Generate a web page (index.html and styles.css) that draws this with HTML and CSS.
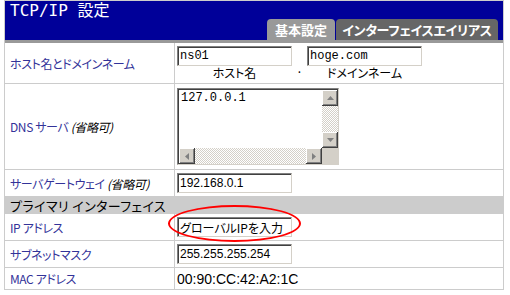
FILE: index.html
```html
<!DOCTYPE html>
<html lang="ja">
<head>
    <meta charset="UTF-8">
    <title>TCP/IP 設定</title>
    <link rel="stylesheet" href="styles.css">
</head>
<body>

<div class="panel">
    <div class="head">
        <h1 class="title">TCP/IP 設定</h1>
        <div class="tabs">
            <span class="tab tab-on">基本設定</span>
            <span class="tab tab-off">インターフェイスエイリアス</span>
        </div>
    </div>
    <div class="bar"></div>

    <div class="row row-host">
        <div class="label">ホスト名とドメインネーム</div>
        <div class="value value-top">
            <div class="hostdomain">
                <input class="field mono" type="text" value="ns01">
                <span></span>
                <input class="field mono" type="text" value="hoge.com">
                <span class="caption">ホスト名</span>
                <span class="dot">.</span>
                <span class="caption">ドメインネーム</span>
            </div>
        </div>
    </div>

    <div class="row row-dns">
        <div class="label">DNS サーバ&nbsp;<em>(省略可)</em></div>
        <div class="value value-top value-dns">
            <div class="textbox">
                <div class="textbox-text mono">127.0.0.1</div>
                <div class="vscroll">
                    <span class="sbtn"><svg width="7" height="4" viewBox="0 0 7 4"><polygon points="3.5,0 7,4 0,4" fill="#808080"/></svg></span>
                    <span class="track"></span>
                    <span class="sbtn"><svg width="7" height="4" viewBox="0 0 7 4"><polygon points="0,0 7,0 3.5,4" fill="#808080"/></svg></span>
                </div>
                <div class="hscroll">
                    <span class="sbtn"><svg width="4" height="7" viewBox="0 0 4 7"><polygon points="4,0 4,7 0,3.5" fill="#808080"/></svg></span>
                    <span class="track"></span>
                    <span class="sbtn"><svg width="4" height="7" viewBox="0 0 4 7"><polygon points="0,0 4,3.5 0,7" fill="#808080"/></svg></span>
                </div>
                <div class="corner"></div>
            </div>
        </div>
    </div>

    <div class="row row-gw">
        <div class="label">サーバゲートウェイ&nbsp;<em>(省略可)</em></div>
        <div class="value">
            <input class="field" type="text" value="192.168.0.1">
        </div>
    </div>

    <div class="row row-section">プライマリ インターフェイス</div>

    <div class="row row-ip">
        <div class="label">IP アドレス</div>
        <div class="value">
            <input class="field field-jp" type="text" value="グローバルIPを入力">
            <span class="mark"></span>
        </div>
    </div>

    <div class="row row-mask">
        <div class="label">サブネットマスク</div>
        <div class="value">
            <input class="field" type="text" value="255.255.255.254">
        </div>
    </div>

    <div class="row row-mac">
        <div class="label">MAC アドレス</div>
        <div class="value"><span class="mac">00:90:CC:42:A2:1C</span></div>
    </div>
</div>

</body>
</html>
```

FILE: styles.css
```css
body {
    margin: 0;
    padding: 0 0 0 4px;
    font-family: "Noto Sans CJK JP", sans-serif;
    font-size: 12px;
    background-color: #fff;
}
.panel {
    width: 500px;
    box-sizing: border-box;
    border: 1px solid #ccc;
}
.head {
    height: 39px;
    background-color: #000099;
    display: flex;
    justify-content: space-between;
}
.title {
    margin: 0;
    padding: 2px 0 0 5px;
    font-family: "DejaVu Sans Mono", "Noto Sans CJK JP", monospace;
    font-size: 16px;
    font-weight: normal;
    line-height: 16px;
    color: #fff;
}
.tabs {
    align-self: flex-end;
    display: flex;
    gap: 1px;
    margin-right: 5px;
}
.tab {
    height: 21px;
    line-height: 21px;
    color: #fff;
    font-weight: bold;
    font-size: 13px;
    text-align: center;
    border-radius: 4px 4px 0 0;
    font-feature-settings: "palt";
}
.tab-on {
    width: 68px;
    background-color: #999;
}
.tab-off {
    width: 162px;
    background-color: #666;
    letter-spacing: -0.3px;
}
.bar {
    height: 3px;
    background-color: #999;
}
.row {
    display: flex;
    box-sizing: border-box;
    border-top: 1px solid #ccc;
}
.row-host { height: 40px; border-top: none; }
.row-dns { height: 86px; }
.row-gw { height: 27px; }
.row-ip { height: 26px; border-top: none; }
.row-mask { height: 27px; }
.row-mac { height: 22px; }
.row-section {
    height: 18px;
    align-items: center;
    padding-left: 5px;
    background-color: #ccc;
    font-size: 13px;
    letter-spacing: 0.4px;
    font-feature-settings: "palt";
    color: #000;
}
.label {
    width: 170px;
    flex: none;
    box-sizing: border-box;
    padding-left: 5px;
    border-right: 1px solid #ccc;
    display: flex;
    align-items: center;
    color: #333399;
    letter-spacing: -0.4px;
    font-feature-settings: "palt";
}
.label em {
    font-style: italic;
    color: #000;
}
.value {
    flex: 1;
    position: relative;
    display: flex;
    align-items: center;
    padding-left: 2px;
}
.value-top {
    align-items: flex-start;
    padding-top: 3px;
}
.value-dns {
    padding-top: 4px;
}
.field {
    width: 115px;
    height: 20px;
    margin: 0;
    padding: 0 0 0 2px;
    box-sizing: border-box;
    border: 1px solid;
    border-color: #808080 #d4d0c8 #d4d0c8 #808080;
    box-shadow: inset 1px 1px #404040;
    background-color: #fff;
    font-family: "Liberation Sans", Arial, sans-serif;
    font-size: 12px;
    color: #000;
    outline: none;
}
.field-jp {
    font-family: "Noto Sans CJK JP", sans-serif;
    font-feature-settings: "palt";
}
.mono {
    font-family: "Liberation Mono", "DejaVu Sans Mono", monospace;
    font-size: 12px;
}
.hostdomain {
    display: grid;
    grid-template-columns: 115px 15px 115px;
    grid-template-rows: 20px auto;
}
.caption {
    text-align: center;
    line-height: 14px;
    color: #000;
    font-feature-settings: "palt";
}
.dot {
    text-align: center;
    line-height: 4px;
    font-size: 12px;
}
.textbox {
    width: 162px;
    height: 77px;
    box-sizing: border-box;
    border: 1px solid;
    border-color: #808080 #d4d0c8 #d4d0c8 #808080;
    box-shadow: inset 1px 1px #404040;
    padding: 1px 0 0 1px;
    display: grid;
    grid-template-columns: 1fr 16px;
    grid-template-rows: 1fr 16px;
    background-color: #fff;
}
.textbox-text {
    padding: 1px 2px;
    line-height: 14px;
}
.vscroll {
    display: grid;
    grid-template-rows: 16px 1fr 16px;
}
.hscroll {
    display: grid;
    grid-template-columns: 16px 1fr 16px;
}
.track {
    background: repeating-conic-gradient(#d4d0c8 0 25%, #fff 0 50%) 0 0 / 2px 2px;
}
.sbtn {
    width: 16px;
    height: 16px;
    display: flex;
    align-items: center;
    justify-content: center;
    background-color: #d4d0c8;
    box-shadow: inset -1px -1px #404040, inset 1px 1px #fff, inset -2px -2px #808080;
}
.corner {
    background-color: #d4d0c8;
}
.mac {
    font-family: "Liberation Sans", Arial, sans-serif;
    font-size: 14px;
    color: #000;
}
.mark {
    position: absolute;
    left: -7px;
    top: -9px;
    width: 133px;
    height: 37px;
    box-sizing: border-box;
    border: 2px solid #f00;
    border-radius: 50%;
    pointer-events: none;
}
```
